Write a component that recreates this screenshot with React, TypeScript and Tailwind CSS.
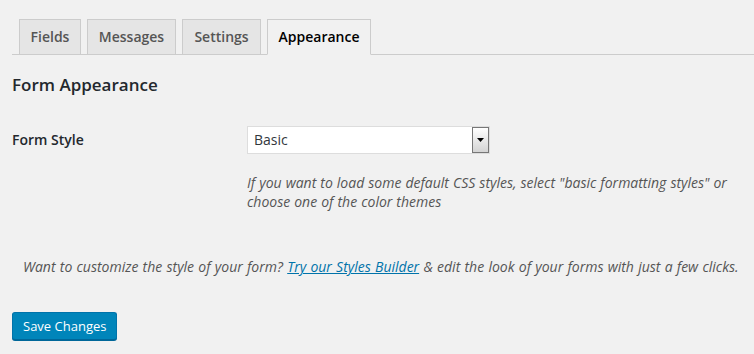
export default function App() {
  const tabs = [
    { label: "Fields", width: "w-[62px]" },
    { label: "Messages", width: "w-[89px]" },
    { label: "Settings", width: "w-[79px]" },
    { label: "Appearance", width: "w-[104px]" },
  ];
  const active = "Appearance";

  return (
    <div className="min-h-screen w-[754px] bg-[#f1f1f1] font-['Open_Sans',sans-serif] text-[#23282d]">
      <div className="pt-[19px] pl-[12px]">
        <div className="flex items-end gap-[6px] border-b border-[#ccc] pl-[7px]">
          {tabs.map((tab) => (
            <div
              key={tab.label}
              className={
                tab.width +
                (tab.label === active
                  ? " -mb-px border border-[#ccc] border-b-[#f1f1f1] bg-[#f1f1f1] py-[5px] text-center text-[14px] font-semibold leading-[24px] text-black"
                  : " -mb-px border border-[#ccc] bg-[#e5e5e5] py-[5px] text-center text-[14px] font-semibold leading-[24px] text-[#555]")
              }
            >
              {tab.label}
            </div>
          ))}
        </div>
      </div>

      <h3 className="ml-[12px] mt-[18px] text-[17px] font-semibold leading-[24px] text-[#23282d]">
        Form Appearance
      </h3>

      <div className="mt-[29px] flex pl-[12px]">
        <div className="w-[235px] pt-[4px] text-[14px] font-semibold leading-[20px] text-[#23282d]">
          Form Style
        </div>
        <div>
          <div className="flex h-[28px] w-[243px] items-stretch border border-[#ddd] bg-white">
            <div className="flex-1 pl-[6px] text-[14px] leading-[26px] text-[#32373c]">
              Basic
            </div>
            <div className="flex w-[17px] items-center justify-center border border-[#777] bg-gradient-to-b from-white to-[#d4d4d4]">
              <svg width="7" height="4" viewBox="0 0 7 4">
                <path d="M0 0h7L3.5 4z" fill="#000" />
              </svg>
            </div>
          </div>
          <p className="mt-[19px] w-[500px] text-[14px] italic leading-[19px] text-[#555] [word-spacing:0.4px]">
            If you want to load some default CSS styles, select "basic formatting styles" or
            choose one of the color themes
          </p>
        </div>
      </div>

      <p className="ml-[23px] mt-[46px] text-[14px] italic leading-[20px] text-[#555] [word-spacing:0.6px]">
        Want to customize the style of your form?{" "}
        <a href="#" className="text-[#0073aa] underline">
          Try our Styles Builder
        </a>{" "}
        &amp; edit the look of your forms with just a few clicks.
      </p>

      <div className="ml-[12px] mt-[35px]">
        <button className="h-[28px] rounded-[3px] border border-[#0073aa] border-b-[#006799] bg-[#0085ba] px-[10px] text-[13px] leading-[26px] text-white shadow-[0_1px_0_#006799]">
          Save Changes
        </button>
      </div>
    </div>
  );
}
